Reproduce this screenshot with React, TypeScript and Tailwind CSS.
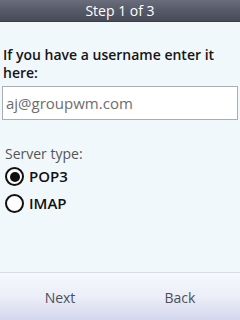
const App = () => {
  return (
    <div
      className="w-[240px] h-[320px] flex flex-col bg-[#f1f8fb] text-[#1a1a1a] overflow-hidden"
      style={{ fontFamily: '"Open Sans", "DejaVu Sans", sans-serif' }}
    >
      <header className="h-[22px] flex items-center justify-center bg-gradient-to-b from-[#6a6e7c] via-[#565a68] to-[#474a57] text-white text-[14px] leading-none border-b border-[#3a3c46]">
        Step 1 of 3
      </header>

      <main className="flex-1 flex flex-col px-[2px]">
        <p className="mt-[24px] px-[1px] text-[14px] leading-[18px] font-semibold text-[#151515]">
          If you have a username enter it here:
        </p>
        <div className="mt-[4px] h-[34px] flex items-center bg-white border border-[#a9adb2] px-[3px] text-[15px] text-[#6d6d6d]">
          aj@groupwm.com
        </div>

        <p className="mt-[25px] px-[3px] text-[14px] leading-[18px] text-[#555]">Server type:</p>

        <div className="mt-[4px] flex flex-col gap-[8px] px-[3px]">
          <label className="flex items-center gap-[5px] text-[15px] leading-[19px] font-semibold text-[#111]">
            <span className="w-[19px] h-[19px] rounded-full border-[2.5px] border-[#111] flex items-center justify-center bg-white">
              <span className="w-[10px] h-[10px] rounded-full bg-[#111]" />
            </span>
            POP3
          </label>
          <label className="flex items-center gap-[5px] text-[15px] leading-[19px] font-semibold text-[#111]">
            <span className="w-[19px] h-[19px] rounded-full border-[2.5px] border-[#111] bg-white" />
            IMAP
          </label>
        </div>
      </main>

      <footer className="h-[48px] grid grid-cols-2 bg-gradient-to-b from-[#f7f8fc] via-[#eceef8] to-[#d4d6ee] border-t border-[#d8dde4] text-[14px] text-[#4a4f5a]">
        <span className="flex items-center justify-center pt-[2px]">Next</span>
        <span className="flex items-center justify-center pt-[2px]">Back</span>
      </footer>
    </div>
  );
};

export default App;
